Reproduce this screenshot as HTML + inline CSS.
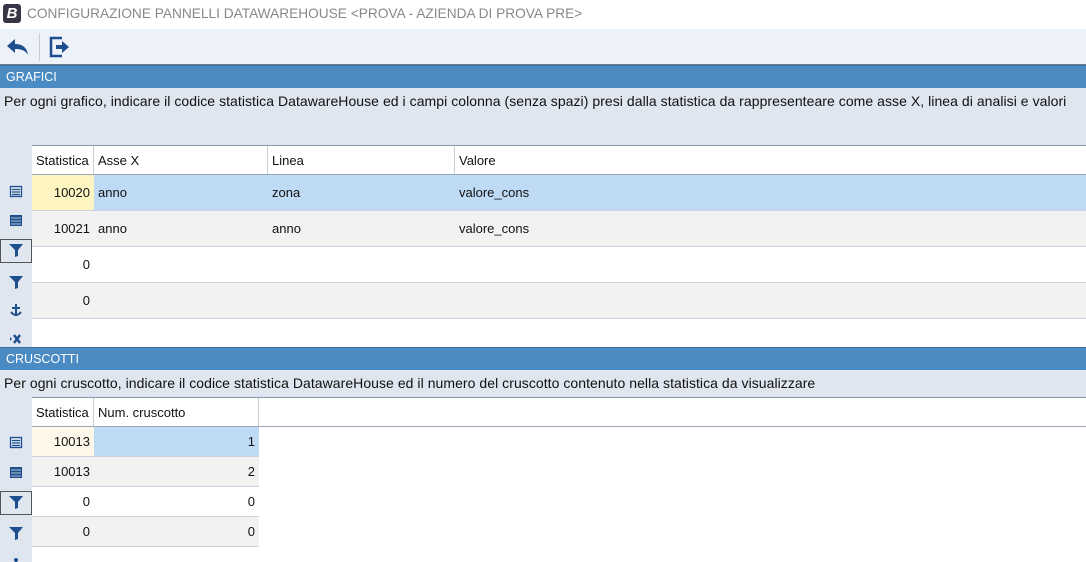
<!DOCTYPE html>
<html><head><style>
*{margin:0;padding:0;box-sizing:border-box}
body{width:1086px;height:562px;overflow:hidden;background:#fff;font-family:"Liberation Sans",Tahoma,sans-serif;font-size:13px;color:#111;position:relative}
.a{position:absolute}
.title{left:27px;top:6px;font-size:13.7px;color:#888;letter-spacing:0}
.bar{left:0;width:1086px;background:#4a8bc4;color:#fff;font-size:12.5px;padding-left:6px;line-height:22px;border-top:1px solid #3d6f9c}
.desc{left:0;width:1086px;background:#dfe6f0;font-size:14px;padding-left:4px;padding-top:5px;letter-spacing:0.05px}
.side{left:0;width:32px;background:#dfe6f0}
.cell{position:absolute;height:100%;top:0;padding:0 4px;display:flex;align-items:center;border-right:1px solid #c9cfd8}
.row{position:absolute;left:32px;border-bottom:1px solid #c9d2de}
.r{justify-content:flex-end}
</style></head><body>
<div class="a" style="left:3px;top:4px;width:18px;height:19px;background:#3a3447;border-radius:3px;color:#fff;font-weight:bold;font-style:italic;font-size:15px;text-align:center;line-height:19px">B</div>
<div class="a title">CONFIGURAZIONE PANNELLI DATAWAREHOUSE &lt;PROVA - AZIENDA DI PROVA PRE&gt;</div>
<div class="a" style="left:0;top:29px;width:1086px;height:36px;background:#edf1f8;border-bottom:1px solid #6b7f95"></div>
<svg class="a" style="left:5px;top:37px" width="26" height="20" viewBox="0 0 26 20"><path d="M10 2 L2 9 L10 16 V12 C16 12 20 13 23 18 C22 11 18 7 10 7 Z" fill="#1d4f8f"/></svg>
<div class="a" style="left:39px;top:33px;width:1px;height:28px;background:#c5ccd6"></div>
<svg class="a" style="left:48px;top:35px" width="24" height="24" viewBox="0 0 24 24"><path d="M14 3 H3 V21 H14" fill="none" stroke="#1d4f8f" stroke-width="2.5"/><path d="M8 10 H14 V6 L21 12 L14 18 V14 H8 Z" fill="#1d4f8f"/></svg>
<div class="a bar" style="top:65px;height:23px">GRAFICI</div>
<div class="a desc" style="top:88px;height:57px">Per ogni grafico, indicare il codice statistica DatawareHouse ed i campi colonna (senza spazi) presi dalla statistica da rappresenteare come asse X, linea di analisi e valori</div>
<div class="a side" style="top:145px;height:202px"></div>
<div class="a" style="left:32px;top:145px;width:1054px;height:202px;background:#fff;border-top:1px solid #8a97a8"></div>
<div class="row" style="top:146px;width:1054px;height:29px;background:#fff;border-bottom-color:#9aa6b6"><div class="cell" style="left:0;width:62px">Statistica</div><div class="cell" style="left:62px;width:174px">Asse X</div><div class="cell" style="left:236px;width:187px">Linea</div><div class="cell" style="left:423px;width:631px;border-right:0">Valore</div></div>
<div class="row" style="top:175px;width:1054px;height:36px;background:#bfdaf5"><div class="cell r" style="left:0;width:62px;background:#fdf6c2;border:0">10020</div><div class="cell" style="left:62px;width:174px;border:0">anno</div><div class="cell" style="left:236px;width:187px;border:0">zona</div><div class="cell" style="left:423px;border:0">valore_cons</div></div>
<div class="row" style="top:211px;width:1054px;height:36px;background:#f2f2f2"><div class="cell r" style="left:0;width:62px;border:0">10021</div><div class="cell" style="left:62px;border:0">anno</div><div class="cell" style="left:236px;border:0">anno</div><div class="cell" style="left:423px;border:0">valore_cons</div></div>
<div class="row" style="top:247px;width:1054px;height:36px;background:#fff"><div class="cell r" style="left:0;width:62px;border:0">0</div></div>
<div class="row" style="top:283px;width:1054px;height:36px;background:#f2f2f2"><div class="cell r" style="left:0;width:62px;border:0">0</div></div>
<div class="a bar" style="top:347px;height:23px">CRUSCOTTI</div>
<div class="a desc" style="top:370px;height:27px;padding-top:5px">Per ogni cruscotto, indicare il codice statistica DatawareHouse ed il numero del cruscotto contenuto nella statistica da visualizzare</div>
<div class="a side" style="top:397px;height:165px"></div>
<div class="a" style="left:32px;top:397px;width:1054px;height:1px;background:#8a97a8"></div>
<div class="row" style="top:398px;width:1054px;height:29px;background:#fff;border-bottom-color:#9aa6b6"><div class="cell" style="left:0;width:62px">Statistica</div><div class="cell" style="left:62px;width:165px">Num. cruscotto</div></div>
<div class="row" style="top:427px;width:227px;height:30px;background:#bfdaf5"><div class="cell r" style="left:0;width:62px;background:#fdf8ea;border:0">10013</div><div class="cell r" style="left:62px;width:165px;border:0">1</div></div>
<div class="row" style="top:457px;width:227px;height:30px;background:#f2f2f2"><div class="cell r" style="left:0;width:62px;border:0">10013</div><div class="cell r" style="left:62px;width:165px;border:0">2</div></div>
<div class="row" style="top:487px;width:227px;height:30px;background:#fff"><div class="cell r" style="left:0;width:62px;border:0">0</div><div class="cell r" style="left:62px;width:165px;border:0">0</div></div>
<div class="row" style="top:517px;width:227px;height:30px;background:#f2f2f2"><div class="cell r" style="left:0;width:62px;border:0">0</div><div class="cell r" style="left:62px;width:165px;border:0">0</div></div>
<svg class="a" style="left:0;top:175px" width="32" height="387" viewBox="0 175 32 387">
<g fill="none" stroke="#1d4f8f" stroke-width="1.3"><rect x="10.5" y="186.5" width="11" height="10"/><path d="M12 189.5H20M12 192H20M12 194.5H20"/></g>
<g fill="#1d4f8f"><rect x="10" y="215" width="12" height="11"/></g><path d="M11 218H21M11 221H21M11 224H21" stroke="#dfe6f0" stroke-width="0.8"/>
<rect x="0.5" y="239.5" width="31" height="23" fill="none" stroke="#555"/>
<path d="M9 244H23L18 250V256L15 257V250Z" fill="#1d4f8f"/>
<path d="M9 276H23L18 282V288L15 289V282Z" fill="#1d4f8f"/>
<path d="M16 304V316M12 308H20M11 312Q16 318 21 312" fill="none" stroke="#1d4f8f" stroke-width="2"/>
<path d="M10 337L12 339L10 341Z" fill="#1d4f8f"/><path d="M14 335L20 343M20 335L14 343" stroke="#1d4f8f" stroke-width="2.4"/>
<g fill="none" stroke="#1d4f8f" stroke-width="1.3"><rect x="10.5" y="437.5" width="11" height="10"/><path d="M12 440.5H20M12 443H20M12 445.5H20"/></g>
<rect x="10" y="467" width="12" height="11" fill="#1d4f8f"/><path d="M11 470H21M11 473H21M11 476H21" stroke="#dfe6f0" stroke-width="0.8"/>
<rect x="0.5" y="491.5" width="31" height="23" fill="none" stroke="#555"/>
<path d="M9 496H23L18 502V508L15 509V502Z" fill="#1d4f8f"/>
<path d="M9 527H23L18 533V539L15 540V533Z" fill="#1d4f8f"/>
<circle cx="16" cy="560" r="2" fill="#1d4f8f"/>
</svg>
</body></html>
